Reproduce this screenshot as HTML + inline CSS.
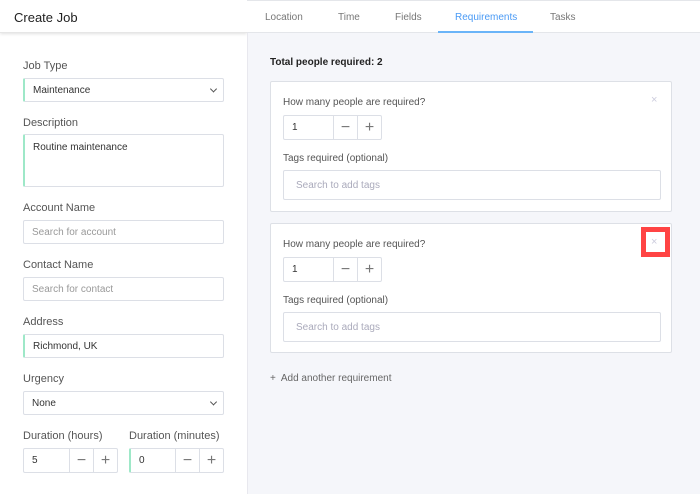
<!DOCTYPE html>
<html><head><style>
*{box-sizing:border-box;margin:0;padding:0}
body{width:700px;height:494px;overflow:hidden;font-family:"Liberation Sans",sans-serif;background:#fff;position:relative;color:#333}
.abs{position:absolute}
.left{left:0;top:0;width:247px;height:494px;background:#fff}
.hdr{left:0;top:0;width:247px;height:33px;box-shadow:0 1px 3px rgba(0,0,0,.12);border-bottom:1px solid #e6e6e6;font-size:13px;color:#222;padding:10px 14px}
.lbl{font-size:11px;color:#555;left:23px}
.inp{border:1px solid #dcdfe6;border-radius:2px;background:#fff;font-size:10px;color:#333;padding:0 8px;display:flex;align-items:center}
.acc{border-left:2px solid #9ee8c8}
.ph{color:#999}
.chev{position:absolute;right:7px;top:50%;width:5px;height:5px;border-right:1.2px solid #555;border-bottom:1.2px solid #555;transform:translateY(-70%) rotate(45deg)}
.right{left:247px;top:0;width:453px;height:494px;background:#f5f6fa;border-left:1px solid #e8e8ee}
.tabs{left:247px;top:0;width:453px;height:33px;background:#fff;border-bottom:1px solid #e4e6ea;border-top:1px solid #e4e6ea}
.tab{position:absolute;top:11px;font-size:10px;color:#777}
.card{left:270px;width:402px;background:#fff;border:1px solid #dde0e6;border-radius:2px}
.step{display:flex;border:1px solid #dcdfe6;border-radius:2px;height:25px;background:#fff}
.step .v{flex:1;font-size:10px;padding:0 8px;display:flex;align-items:center}
.step .b{width:24px;border-left:1px solid #dcdfe6;display:flex;align-items:center;justify-content:center;color:#777;font-size:16px;font-weight:300}
.x{position:absolute;color:#ccd;font-size:11px}
</style></head><body>
<div class="abs left"></div>
<div class="abs hdr">Create Job</div>
<div class="abs lbl" style="top:60px">Job Type</div>
<div class="abs inp acc" style="left:23px;top:78px;width:201px;height:24px">Maintenance<span class="chev"></span></div>
<div class="abs lbl" style="top:117px">Description</div>
<div class="abs inp acc" style="left:23px;top:134px;width:201px;height:53px;align-items:flex-start;padding-top:7px">Routine maintenance</div>
<div class="abs lbl" style="top:202px">Account Name</div>
<div class="abs inp" style="left:23px;top:220px;width:201px;height:24px"><span class="ph">Search for account</span></div>
<div class="abs lbl" style="top:259px">Contact Name</div>
<div class="abs inp" style="left:23px;top:277px;width:201px;height:24px"><span class="ph">Search for contact</span></div>
<div class="abs lbl" style="top:316px">Address</div>
<div class="abs inp acc" style="left:23px;top:334px;width:201px;height:24px">Richmond, UK</div>
<div class="abs lbl" style="top:373px">Urgency</div>
<div class="abs inp" style="left:23px;top:391px;width:201px;height:24px">None<span class="chev"></span></div>
<div class="abs lbl" style="top:430px">Duration (hours)</div>
<div class="abs lbl" style="top:430px;left:129px">Duration (minutes)</div>
<div class="abs step" style="left:23px;top:448px;width:95px"><div class="v">5</div><div class="b">−</div><div class="b">+</div></div>
<div class="abs step" style="left:129px;top:448px;width:95px;border-left:2px solid #9ee8c8"><div class="v">0</div><div class="b">−</div><div class="b">+</div></div>

<div class="abs right"></div>
<div class="abs tabs">
<span class="tab" style="left:18px">Location</span>
<span class="tab" style="left:91px">Time</span>
<span class="tab" style="left:148px">Fields</span>
<span class="tab" style="left:208px;color:#4a9af5">Requirements</span>
<span class="tab" style="left:303px">Tasks</span>
<div style="position:absolute;left:191px;top:30px;width:95px;height:2px;background:#6ab4f8"></div>
</div>
<div class="abs" style="left:270px;top:57px;font-size:10px;font-weight:bold;color:#222">Total people required: 2</div>

<div class="abs card" style="top:81px;height:131px">
<span class="x" style="left:380px;top:12px">×</span>
<div class="abs" style="left:12px;top:15px;font-size:10px;color:#555">How many people are required?</div>
<div class="abs step" style="left:12px;top:33px;width:99px"><div class="v">1</div><div class="b">−</div><div class="b">+</div></div>
<div class="abs" style="left:12px;top:71px;font-size:10px;color:#555">Tags required (optional)</div>
<div class="abs inp" style="left:12px;top:88px;width:378px;height:30px;padding-left:12px"><span class="ph" style="color:#aab">Search to add tags</span></div>
</div>

<div class="abs card" style="top:223px;height:130px">
<span class="x" style="left:380px;top:12px">×</span>
<div class="abs" style="left:12px;top:15px;font-size:10px;color:#555">How many people are required?</div>
<div class="abs step" style="left:12px;top:33px;width:99px"><div class="v">1</div><div class="b">−</div><div class="b">+</div></div>
<div class="abs" style="left:12px;top:71px;font-size:10px;color:#555">Tags required (optional)</div>
<div class="abs inp" style="left:12px;top:88px;width:378px;height:30px;padding-left:12px"><span class="ph" style="color:#aab">Search to add tags</span></div>
</div>
<div class="abs" style="left:641px;top:227px;width:29px;height:30px;border:5px solid #f44"></div>
<div class="abs" style="left:270px;top:373px;font-size:10px;color:#666">+&nbsp; Add another requirement</div>
</body></html>
